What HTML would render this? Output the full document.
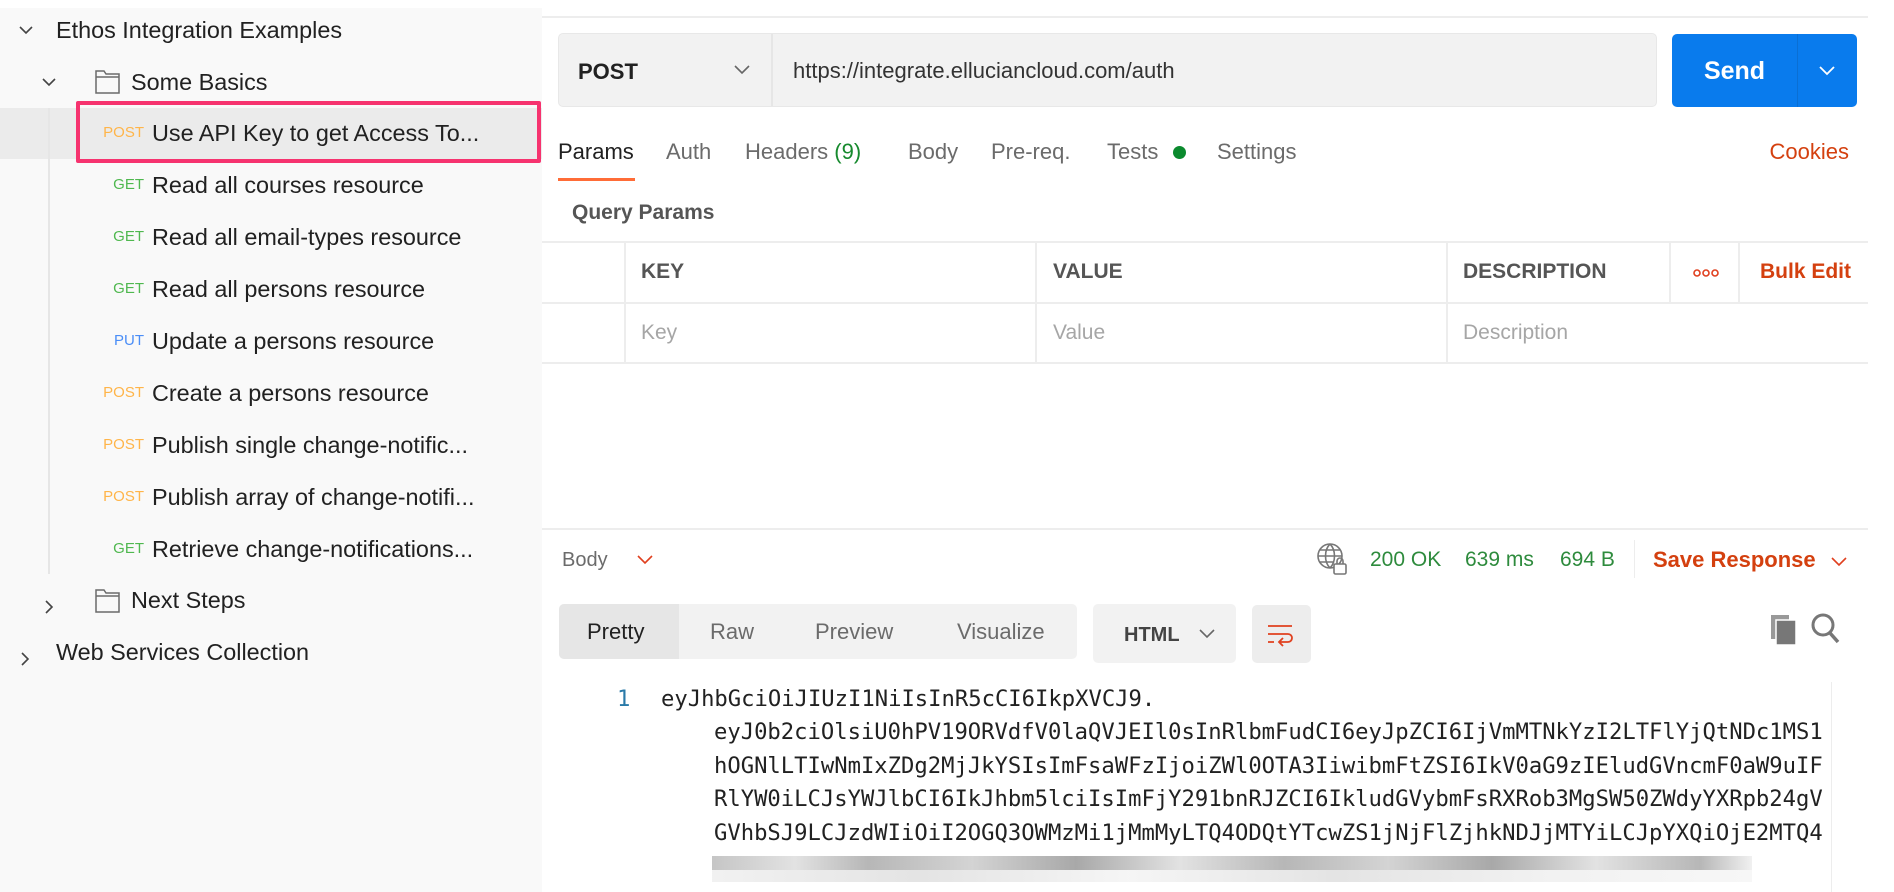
<!DOCTYPE html>
<html><head><meta charset="utf-8"><style>
*{margin:0;padding:0;box-sizing:border-box}
body{width:1894px;height:892px;position:relative;overflow:hidden;background:#fff;font-family:"Liberation Sans",Arial,sans-serif;color:#212121}
.a{position:absolute;white-space:nowrap}
.t{font-size:22px;line-height:26px}
.s{font-size:23.4px;line-height:26px}
.m{font-size:15px;line-height:26px;text-align:right;width:50px}
.post{color:#ffb54a}.get{color:#4fb84f}.put{color:#4b8ef7}
.hl{position:absolute;height:2px;background:#ededed}
.vl{position:absolute;width:2px;background:#ededed}
.g{color:#6b6b6b}
.code{font-family:"DejaVu Sans Mono","Liberation Mono",monospace;font-size:22.2px;line-height:33.4px;color:#212121}
</style></head><body>
<div class="a" style="left:0;top:8px;width:542px;height:884px;background:#f9f9f9"></div>
<div class="a" style="left:0;top:108px;width:542px;height:51px;background:#ebebeb"></div>
<div class="a" style="left:48px;top:108px;width:2px;height:466px;background:#e6e6e6"></div>
<div class="a" style="left:76px;top:101px;width:465px;height:62px;border:4px solid #f6336f;border-radius:2px"></div>
<svg class="a" style="left:18px;top:24px" width="16" height="12" viewBox="0 0 16 12"><path d="M2 3l6 6 6-6" fill="none" stroke="#444" stroke-width="1.6"/></svg>
<div class="a s" style="left:56px;top:17px">Ethos Integration Examples</div>
<svg class="a" style="left:41px;top:76px" width="16" height="12" viewBox="0 0 16 12"><path d="M2 3l6 6 6-6" fill="none" stroke="#444" stroke-width="1.6"/></svg>
<svg class="a" style="left:95px;top:69px" width="26" height="26" viewBox="0 0 26 26"><path d="M1 24V2h8l2 3h13v19z M1 8h23" fill="none" stroke="#6b6b6b" stroke-width="1.5"/></svg>
<div class="a s" style="left:131px;top:69px">Some Basics</div>

<div class="a m post" style="left:94px;top:120px">POST</div><div class="a s" style="left:152px;top:120px">Use API Key to get Access To...</div>
<div class="a m get" style="left:94px;top:172px">GET</div><div class="a s" style="left:152px;top:172px">Read all courses resource</div>
<div class="a m get" style="left:94px;top:224px">GET</div><div class="a s" style="left:152px;top:224px">Read all email-types resource</div>
<div class="a m get" style="left:94px;top:276px">GET</div><div class="a s" style="left:152px;top:276px">Read all persons resource</div>
<div class="a m put" style="left:94px;top:328px">PUT</div><div class="a s" style="left:152px;top:328px">Update a persons resource</div>
<div class="a m post" style="left:94px;top:380px">POST</div><div class="a s" style="left:152px;top:380px">Create a persons resource</div>
<div class="a m post" style="left:94px;top:432px">POST</div><div class="a s" style="left:152px;top:432px">Publish single change-notific...</div>
<div class="a m post" style="left:94px;top:484px">POST</div><div class="a s" style="left:152px;top:484px">Publish array of change-notifi...</div>
<div class="a m get" style="left:94px;top:536px">GET</div><div class="a s" style="left:152px;top:536px">Retrieve change-notifications...</div>
<svg class="a" style="left:43px;top:599px" width="12" height="16" viewBox="0 0 12 16"><path d="M3 2l6 6-6 6" fill="none" stroke="#444" stroke-width="1.6"/></svg>
<svg class="a" style="left:95px;top:588px" width="26" height="26" viewBox="0 0 26 26"><path d="M1 24V2h8l2 3h13v19z M1 8h23" fill="none" stroke="#6b6b6b" stroke-width="1.5"/></svg>
<div class="a s" style="left:131px;top:587px">Next Steps</div>
<svg class="a" style="left:19px;top:651px" width="12" height="16" viewBox="0 0 12 16"><path d="M3 2l6 6-6 6" fill="none" stroke="#444" stroke-width="1.6"/></svg>
<div class="a s" style="left:56px;top:639px">Web Services Collection</div>

<div class="hl" style="left:542px;top:16px;width:1326px"></div>
<div class="a" style="left:558px;top:33px;width:1099px;height:74px;background:#f2f2f2;border:1.5px solid #e8e8e8;border-radius:5px"></div>
<div class="vl" style="left:771px;top:34px;height:72px;background:#e6e6e6"></div>
<div class="a" style="left:578px;top:58px;font-size:22px;font-weight:bold;line-height:28px">POST</div>
<svg class="a" style="left:733px;top:64px" width="18" height="12" viewBox="0 0 18 12"><path d="M2 2l7 7 7-7" fill="none" stroke="#666" stroke-width="1.6"/></svg>
<div class="a" style="left:793px;top:57px;font-size:22px;line-height:28px;color:#333">https://integrate.elluciancloud.com/auth</div>
<div class="a" style="left:1672px;top:34px;width:185px;height:73px;background:#097bed;border-radius:5px"></div>
<div class="vl" style="left:1797px;top:34px;height:73px;background:#0a6fd4;width:1px"></div>
<div class="a" style="left:1672px;top:56px;width:125px;text-align:center;color:#fff;font-weight:bold;font-size:25px;line-height:30px">Send</div>
<svg class="a" style="left:1818px;top:65px" width="18" height="12" viewBox="0 0 18 12"><path d="M2 2l7 7 7-7" fill="none" stroke="#fff" stroke-width="1.8"/></svg>

<div class="a t" style="left:558px;top:139px;color:#212121">Params</div>
<div class="a" style="left:558px;top:178px;width:77px;height:3px;background:#ff6c37"></div>
<div class="a t g" style="left:666px;top:139px">Auth</div>
<div class="a t g" style="left:745px;top:139px">Headers <span style="color:#178a2e">(9)</span></div>
<div class="a t g" style="left:908px;top:139px">Body</div>
<div class="a t g" style="left:991px;top:139px">Pre-req.</div>
<div class="a t g" style="left:1107px;top:139px">Tests</div>
<div class="a" style="left:1173px;top:146px;width:13px;height:13px;border-radius:50%;background:#0b8a2e"></div>
<div class="a t g" style="left:1217px;top:139px">Settings</div>
<div class="a t" style="left:1700px;top:139px;width:149px;text-align:right;color:#d4400f">Cookies</div>

<div class="a" style="left:572px;top:200px;font-size:21px;line-height:26px;font-weight:bold;color:#555">Query Params</div>
<div class="hl" style="left:542px;top:241px;width:1326px"></div>
<div class="hl" style="left:542px;top:302px;width:1326px"></div>
<div class="hl" style="left:542px;top:362px;width:1326px"></div>
<div class="vl" style="left:624px;top:242px;height:121px"></div>
<div class="vl" style="left:1035px;top:242px;height:121px"></div>
<div class="vl" style="left:1446px;top:242px;height:121px"></div>
<div class="vl" style="left:1669px;top:242px;height:61px"></div>
<div class="vl" style="left:1738px;top:242px;height:61px"></div>
<div class="a" style="left:641px;top:259px;font-size:21px;font-weight:bold;color:#555;line-height:26px">KEY</div>
<div class="a" style="left:1053px;top:259px;font-size:21px;font-weight:bold;color:#555;line-height:26px">VALUE</div>
<div class="a" style="left:1463px;top:259px;font-size:21px;font-weight:bold;color:#555;line-height:26px">DESCRIPTION</div>
<svg class="a" style="left:1692px;top:268px" width="28" height="10" viewBox="0 0 28 10"><g fill="none" stroke="#e0401f" stroke-width="1.6"><circle cx="5" cy="5" r="3"/><circle cx="14" cy="5" r="3"/><circle cx="23" cy="5" r="3"/></g></svg>
<div class="a" style="left:1760px;top:259px;font-size:21px;font-weight:bold;color:#d4400f;line-height:26px">Bulk Edit</div>
<div class="a t" style="left:641px;top:320px;color:#a6a6a6;font-size:21px">Key</div>
<div class="a t" style="left:1053px;top:320px;color:#a6a6a6;font-size:21px">Value</div>
<div class="a t" style="left:1463px;top:320px;color:#a6a6a6;font-size:21px">Description</div>

<div class="hl" style="left:542px;top:528px;width:1326px"></div>
<div class="a t" style="left:562px;top:547px;font-size:20px;color:#6b6b6b">Body</div>
<svg class="a" style="left:636px;top:554px" width="18" height="12" viewBox="0 0 18 12"><path d="M2 2l7 7 7-7" fill="none" stroke="#e0401f" stroke-width="1.6"/></svg>
<svg class="a" style="left:1316px;top:542px" width="32" height="34" viewBox="0 0 32 34"><g fill="none" stroke="#777" stroke-width="1.6"><circle cx="14" cy="14" r="12"/><path d="M2 14h24M14 2c-6 6-6 18 0 24M14 2c6 6 6 18 0 24M4 8h20M4 20h14"/></g><rect x="18" y="22" width="12" height="10" rx="1.5" fill="#fff" stroke="#777" stroke-width="1.6"/><path d="M21 22v-3a3 3 0 0 1 6 0v3" fill="none" stroke="#777" stroke-width="1.6"/></svg>
<div class="a t" style="left:1370px;top:547px;font-size:21px;color:#2e8b3d">200 OK</div>
<div class="a t" style="left:1465px;top:547px;font-size:21px;color:#2e8b3d">639 ms</div>
<div class="a t" style="left:1560px;top:547px;font-size:21px;color:#2e8b3d">694 B</div>
<div class="vl" style="left:1634px;top:540px;height:38px;width:1px"></div>
<div class="a t" style="left:1653px;top:547px;font-size:22px;color:#d4400f;font-weight:bold">Save Response</div>
<svg class="a" style="left:1830px;top:556px" width="18" height="12" viewBox="0 0 18 12"><path d="M2 2l7 7 7-7" fill="none" stroke="#e0401f" stroke-width="1.6"/></svg>

<div class="a" style="left:559px;top:604px;width:518px;height:55px;background:#f2f2f2;border-radius:5px"></div>
<div class="a" style="left:559px;top:604px;width:120px;height:55px;background:#e6e6e6;border-radius:5px 0 0 5px"></div>
<div class="a t" style="left:587px;top:619px;font-size:22px;color:#212121">Pretty</div>
<div class="a t" style="left:710px;top:619px;font-size:22px;color:#6b6b6b">Raw</div>
<div class="a t" style="left:815px;top:619px;font-size:22px;color:#6b6b6b">Preview</div>
<div class="a t" style="left:957px;top:619px;font-size:22px;color:#6b6b6b">Visualize</div>
<div class="a" style="left:1093px;top:604px;width:143px;height:59px;background:#f2f2f2;border-radius:5px"></div>
<div class="a t" style="left:1124px;top:622px;font-size:20px;font-weight:bold;color:#444">HTML</div>
<svg class="a" style="left:1198px;top:628px" width="18" height="12" viewBox="0 0 18 12"><path d="M2 2l7 7 7-7" fill="none" stroke="#666" stroke-width="1.6"/></svg>
<div class="a" style="left:1252px;top:605px;width:59px;height:58px;background:#ededed;border-radius:5px"></div>
<svg class="a" style="left:1266px;top:620px" width="30" height="30" viewBox="0 0 30 30"><g fill="none" stroke="#e0401f" stroke-width="1.8"><path d="M2 6h24M2 14h20a4 4 0 0 1 0 8h-8M2 22h6M17 18l-4 4 4 4"/></g></svg>
<svg class="a" style="left:1770px;top:614px" width="28" height="32" viewBox="0 0 28 32"><rect x="1" y="1" width="18" height="24" fill="#999"/><rect x="6" y="6" width="20" height="25" fill="#777" stroke="#fff" stroke-width="1.5"/></svg>
<svg class="a" style="left:1810px;top:612px" width="32" height="34" viewBox="0 0 32 34"><circle cx="13" cy="13" r="10" fill="none" stroke="#777" stroke-width="3"/><path d="M20 21l8 9" stroke="#777" stroke-width="3.5"/></svg>

<div class="vl" style="left:1831px;top:682px;height:210px;width:1px"></div>
<div class="a code" style="left:617px;top:683px;color:#2a7aa8">1</div>
<div class="a code" style="left:661px;top:683px">eyJhbGciOiJIUzI1NiIsInR5cCI6IkpXVCJ9.</div>
<div class="a code" style="left:714px;top:716px">eyJ0b2ciOlsiU0hPV19ORVdfV0laQVJEIl0sInRlbmFudCI6eyJpZCI6IjVmMTNkYzI2LTFlYjQtNDc1MS1</div>
<div class="a code" style="left:714px;top:750px">hOGNlLTIwNmIxZDg2MjJkYSIsImFsaWFzIjoiZWl0OTA3IiwibmFtZSI6IkV0aG9zIEludGVncmF0aW9uIF</div>
<div class="a code" style="left:714px;top:783px">RlYW0iLCJsYWJlbCI6IkJhbm5lciIsImFjY291bnRJZCI6IkludGVybmFsRXRob3MgSW50ZWdyYXRpb24gV</div>
<div class="a code" style="left:714px;top:817px">GVhbSJ9LCJzdWIiOiI2OGQ3OWMzMi1jMmMyLTQ4ODQtYTcwZS1jNjFlZjhkNDJjMTYiLCJpYXQiOjE2MTQ4</div>
<div class="a" style="left:712px;top:856px;width:1040px;height:14px;background:linear-gradient(90deg,#bbb,#ddd 8%,#aaa 15%,#ccc 25%,#999 35%,#ddd 45%,#aaa 55%,#ccc 65%,#999 75%,#ddd 85%,#aaa 95%,#eee);opacity:.85"></div>
<div class="a" style="left:712px;top:870px;width:1040px;height:12px;background:linear-gradient(90deg,#eee,#ddd 20%,#f3f3f3 40%,#ddd 60%,#eee 80%,#f5f5f5);opacity:.8"></div>
</body></html>
